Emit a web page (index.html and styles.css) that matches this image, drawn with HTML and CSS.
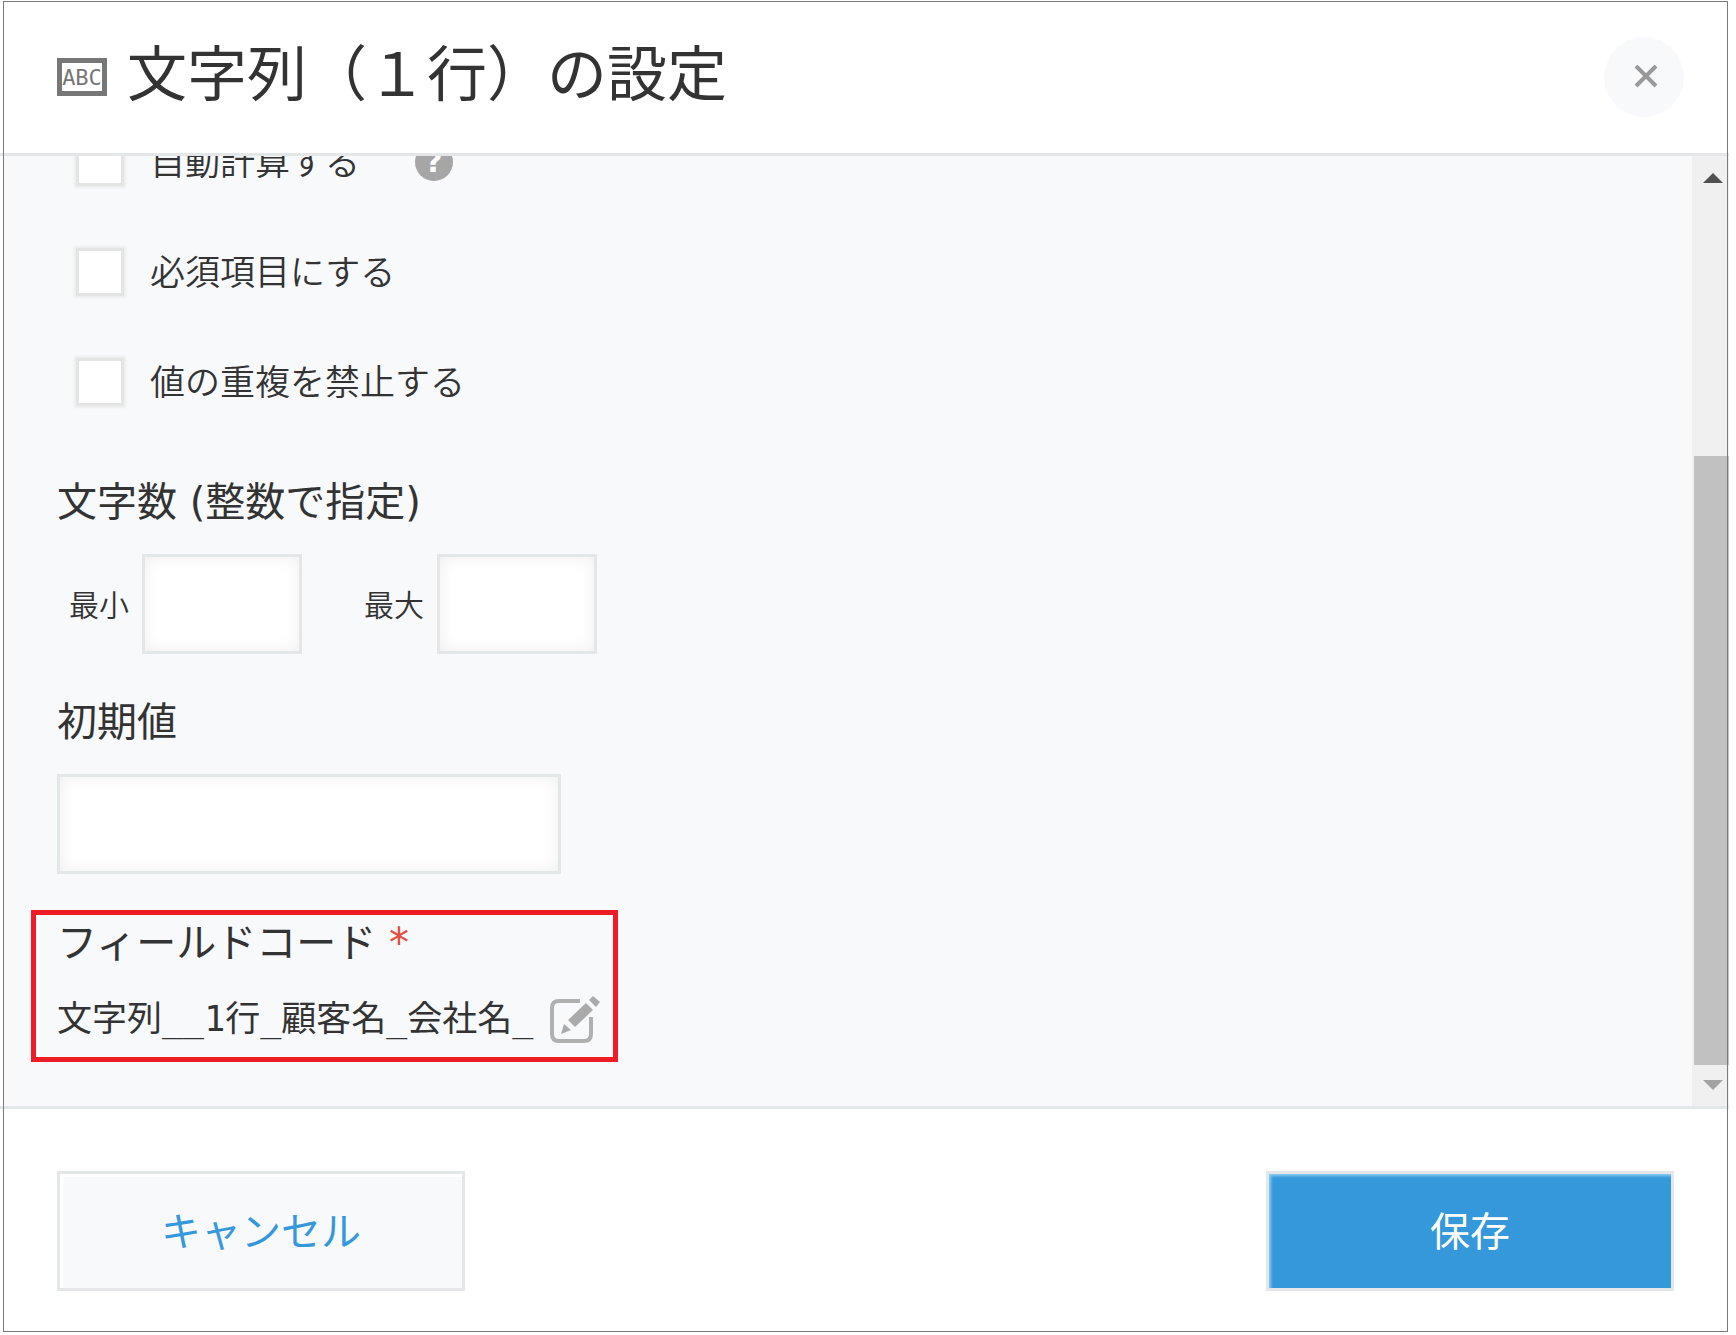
FILE: index.html
```html
<!DOCTYPE html>
<html lang="ja">
<head>
  <meta charset="UTF-8">
  <title>文字列（１行）の設定</title>
  <link rel="stylesheet" href="styles.css">
</head>
<body>

  <form class="dialog">
    <header class="dialog-header">
      <span class="type-icon">ABC</span>
      <h1>文字列（１行）の設定</h1>
      <button type="button" class="close" aria-label="閉じる">
        <svg width="28" height="24" viewBox="0 0 28 24">
          <path d="M6 1 L26 21 M26 1 L6 21" stroke="#999" stroke-width="4" fill="none"/>
        </svg>
      </button>
    </header>

    <div class="dialog-body">
      <div class="settings">
        <div class="check-row">
          <input type="checkbox" id="auto-calc">
          <label for="auto-calc">自動計算する</label>
          <button type="button" class="help">?</button>
        </div>
        <div class="check-row">
          <input type="checkbox" id="required">
          <label for="required">必須項目にする</label>
        </div>
        <div class="check-row">
          <input type="checkbox" id="unique">
          <label for="unique">値の重複を禁止する</label>
        </div>

        <section class="group">
          <h2>文字数 (整数で指定)</h2>
          <div class="range">
            <label for="min">最小</label>
            <input type="text" id="min" class="text-box short">
            <label for="max">最大</label>
            <input type="text" id="max" class="text-box short">
          </div>
        </section>

        <section class="group">
          <h2><label for="default-value">初期値</label></h2>
          <input type="text" id="default-value" class="text-box">
        </section>

        <section class="group highlight">
          <h2>フィールドコード <span class="required">*</span></h2>
          <div class="code-row">
            <span class="code">文字列__1行_顧客名_会社名_</span>
            <button type="button" class="edit" aria-label="編集">
              <svg width="50" height="48" viewBox="0 0 50 48">
                <path d="M30 6 H9 Q2 6 2 13 V39 Q2 46 9 46 H34 Q41 46 41 39 V22" fill="none" stroke="#b0b0b0" stroke-width="4"/>
                <path d="M18 25 L36 8 L43 15 L25 32 Z" fill="#aaa"/>
                <path d="M14 29 L21 35 L11 39 Z" fill="#aaa"/>
                <path d="M39 5 L43 1 L50 7 L46 12 Z" fill="#aaa"/>
              </svg>
            </button>
          </div>
        </section>
      </div>

      <!-- scroll bar -->
      <div class="scrollbar" aria-hidden="true">
        <span class="arrow up"></span>
        <span class="thumb"></span>
        <span class="arrow down"></span>
      </div>
    </div>

    <footer class="dialog-footer">
      <button type="button" class="btn cancel">キャンセル</button>
      <button type="submit" class="btn save">保存</button>
    </footer>
  </form>

</body>
</html>
```

FILE: styles.css
```css
* {
  box-sizing: border-box;
}

body {
  margin: 0;
  background: #fff;
  color: #333;
  font-family: "DejaVu Sans", "Noto Sans CJK JP", sans-serif;
}

button,
input {
  font: inherit;
}

button {
  padding: 0;
  border: none;
  background: none;
  cursor: pointer;
}

h1,
h2 {
  margin: 0;
  font-weight: 400;
}

svg {
  display: block;
}

.dialog {
  position: relative;
  display: flex;
  flex-direction: column;
  height: 100vh;
  margin-right: 7px;
}

/* thin frame drawn over the header, body and footer */
.dialog::after {
  content: "";
  position: absolute;
  top: 1px;
  right: 1px;
  bottom: 3px;
  left: 3px;
  border: 1px solid #7a7a7a;
  pointer-events: none;
}

.dialog-header {
  display: flex;
  align-items: center;
  height: 156px;
  padding: 0 45px 0 57px;
  border-bottom: 3px solid #e3e7e8;
}

.type-icon {
  width: 50px;
  height: 38px;
  border: 5px solid #777;
  color: #777;
  font-family: "DejaVu Sans Mono", monospace;
  font-size: 22px;
  line-height: 30px;
  text-align: center;
}

h1 {
  margin-left: 20px;
  padding-bottom: 4px;
  font-size: 60px;
  line-height: 80px;
}

.close {
  display: flex;
  align-items: center;
  justify-content: center;
  width: 80px;
  height: 80px;
  margin-left: auto;
  border-radius: 50%;
  background: #f7f9fb;
}

.dialog-body {
  display: flex;
  flex: 1;
  min-height: 0;
  margin-left: 3px;
  background: #f7f9fb;
}

/* scrolled to the end */
.settings {
  display: flex;
  flex: 1;
  flex-direction: column;
  justify-content: flex-end;
  padding: 0 54px 44px;
  overflow: hidden;
}

.check-row {
  display: flex;
  flex-shrink: 0;
  align-items: center;
  height: 110px;
  padding-left: 19px;
  font-size: 35px;
  font-weight: 350;
}

.check-row label {
  padding-bottom: 6px;
}

.check-row input {
  appearance: none;
  width: 48px;
  height: 48px;
  margin: 0 26px 0 0;
  border: 3px solid #e3e5e5;
  background: #fff;
  box-shadow: 0 0 2px 2px #eceeee;
}

.check-row + .group {
  margin-top: 39px;
}

.help {
  width: 38px;
  height: 38px;
  margin-left: 55px;
  border-radius: 50%;
  background: #a6a6a6;
  color: #fff;
  font-size: 30px;
  font-weight: bold;
  line-height: 38px;
}

.group {
  margin-top: 42px;
}

h2 {
  margin-bottom: 26px;
  font-size: 40px;
  line-height: 52px;
}

.text-box {
  display: block;
  width: 504px;
  height: 100px;
  padding: 0 16px;
  border: 3px solid #e3e7e8;
  background: #fff;
  box-shadow: inset 0 0 16px #eee;
  font-size: 35px;
}

.range {
  display: flex;
  align-items: center;
  padding-left: 12px;
  font-size: 30px;
  font-weight: 350;
}

.range label {
  padding-bottom: 2px;
}

.range .short {
  width: 160px;
  margin: 0 62px 0 13px;
}

.highlight {
  align-self: flex-start;
  margin-top: 36px;
  margin-left: -26px;
  padding: 2px 13px 14px 21px;
  border: 5px solid #ee1c25;
}

.required {
  color: #e74c3c;
}

.code-row {
  display: flex;
  align-items: center;
  gap: 17px;
  height: 48px;
}

.code {
  font-family: "DejaVu Sans Mono", "Noto Sans CJK JP", monospace;
  font-size: 35px;
  line-height: 46px;
}

.scrollbar {
  display: flex;
  flex-direction: column;
  align-items: flex-end;
  width: 37px;
  background: #f0f0f0;
}

.arrow {
  margin-right: 6px;
  border: 10px solid transparent;
}

.up {
  margin-top: 7px;
  border-bottom-color: #505050;
}

.thumb {
  flex: 1;
  width: 35px;
  margin: 273px 0 15px;
  background: #c1c1c1;
}

.down {
  margin-bottom: 6px;
  border-top-color: #a3a3a3;
}

.dialog-footer {
  display: flex;
  align-items: center;
  justify-content: space-between;
  height: 229px;
  padding: 18px 55px 0 57px;
  border-top: 3px solid #e3e7e8;
}

.btn {
  width: 408px;
  height: 120px;
  padding-bottom: 4px;
  border: 3px solid #e3e7e8;
  font-size: 40px;
}

.cancel {
  background: #f7f9fb;
  box-shadow: inset 3px 3px 1px #fff;
  color: #3498db;
}

.save {
  background: #3498db;
  box-shadow: inset 2px 2px 3px #8accf2;
  color: #fff;
}
```
